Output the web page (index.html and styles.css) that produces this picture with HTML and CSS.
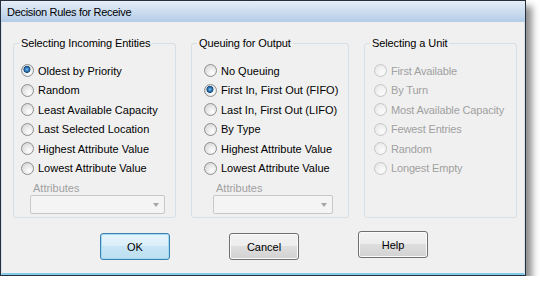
FILE: index.html
```html
<!DOCTYPE html>
<html lang="en">
<head>
  <meta charset="UTF-8">
  <title>Decision Rules for Receive</title>
  <link rel="stylesheet" href="styles.css">
</head>
<body>

  <div class="window">
    <div class="titlebar">Decision Rules for Receive</div>

    <div class="client">
      <div class="groups">

        <fieldset class="group group-incoming">
          <legend>Selecting Incoming Entities</legend>
          <div class="options">
            <label class="option"><input type="radio" name="incoming" checked> Oldest by Priority</label>
            <label class="option"><input type="radio" name="incoming"> Random</label>
            <label class="option"><input type="radio" name="incoming"> Least Available Capacity</label>
            <label class="option"><input type="radio" name="incoming"> Last Selected Location</label>
            <label class="option"><input type="radio" name="incoming"> Highest Attribute Value</label>
            <label class="option"><input type="radio" name="incoming"> Lowest Attribute Value</label>
            <div class="attr">
              <span class="attr-label">Attributes</span>
              <div class="combo"><span class="combo-arrow"></span></div>
            </div>
          </div>
        </fieldset>

        <fieldset class="group group-queuing">
          <legend>Queuing for Output</legend>
          <div class="options">
            <label class="option"><input type="radio" name="queuing"> No Queuing</label>
            <label class="option"><input type="radio" name="queuing" checked> First In, First Out (FIFO)</label>
            <label class="option"><input type="radio" name="queuing"> Last In, First Out (LIFO)</label>
            <label class="option"><input type="radio" name="queuing"> By Type</label>
            <label class="option"><input type="radio" name="queuing"> Highest Attribute Value</label>
            <label class="option"><input type="radio" name="queuing"> Lowest Attribute Value</label>
            <div class="attr">
              <span class="attr-label">Attributes</span>
              <div class="combo"><span class="combo-arrow"></span></div>
            </div>
          </div>
        </fieldset>

        <fieldset class="group group-unit">
          <legend>Selecting a Unit</legend>
          <div class="options">
            <label class="option disabled"><input type="radio" name="unit" disabled> First Available</label>
            <label class="option disabled"><input type="radio" name="unit" disabled> By Turn</label>
            <label class="option disabled"><input type="radio" name="unit" disabled> Most Available Capacity</label>
            <label class="option disabled"><input type="radio" name="unit" disabled> Fewest Entries</label>
            <label class="option disabled"><input type="radio" name="unit" disabled> Random</label>
            <label class="option disabled"><input type="radio" name="unit" disabled> Longest Empty</label>
          </div>
        </fieldset>

      </div>

      <div class="buttons">
        <button class="btn btn-default">OK</button>
        <button class="btn">Cancel</button>
        <button class="btn btn-help">Help</button>
      </div>
    </div>
  </div>

</body>
</html>
```

FILE: styles.css
```css
body {
  margin: 0;
  background: #fff;
  font-family: "Liberation Sans", Arial, sans-serif;
  font-size: 11px;
  color: #000;
}
/* Ventana */
.window {
  box-sizing: border-box;
  width: 526px;
  height: 276px;
  border: 1px solid #26313d;
  display: flex;
  flex-direction: column;
  background: #f0f0f0;
  box-shadow: 6px 6px 7px rgba(0,0,0,0.45);
}
.titlebar {
  height: 21px;
  line-height: 22px;
  padding-left: 6px;
  font-size: 11px;
  letter-spacing: -0.3px;
  background: linear-gradient(#e6eef8, #b3cce7);
}
.client {
  flex: 1;
  padding: 14px 0 0 11px;
  border-style: solid;
  border-width: 0 1px 2px 1px;
  border-color: #d3e1ef #d3e1ef #83cbe8 #d3e1ef;
}
.groups {
  display: grid;
  grid-template-columns: 163px 158px 153px;
  column-gap: 15px;
}
/* Grupos */
.group {
  margin: 0;
  min-width: 0;
  padding: 11px 8px 3px 5px;
  border: 1px solid #d5dfe5;
  border-radius: 3px;
}
.group legend {
  padding: 0 2px;
  line-height: 14px;
  letter-spacing: -0.1px;
}
.group-incoming .options { padding-left: 2px; }
.group-queuing .options { padding-left: 7px; }
.group-unit .options { padding-left: 4px; }

.option {
  display: flex;
  align-items: center;
  gap: 4px;
  height: 19.5px;
}
.option.disabled {
  color: #a0a0a0;
}
.group-unit .option {
  letter-spacing: -0.15px;
}
.option input {
  appearance: none;
  -webkit-appearance: none;
  flex: none;
  width: 13px;
  height: 13px;
  margin: 0;
  border: 1px solid #8d8f90;
  border-radius: 50%;
  background: radial-gradient(circle at 65% 70%, #ffffff 0, #eeeeee 35%, #cfcfcf 100%);
}
.option input:checked {
  background:
    radial-gradient(circle at 45% 40%, #7fc4ee 0, #2c74b4 2px, #174b7a 3.2px, rgba(0,0,0,0) 3.8px),
    radial-gradient(circle at 65% 70%, #ffffff 0, #eeeeee 35%, #cfcfcf 100%);
}
.option input:disabled {
  border-color: #c6c6c6;
  background: radial-gradient(circle at 65% 70%, #fbfbfb 0, #f3f3f3 40%, #e2e2e2 100%);
}
/* Atributos */
.attr {
  margin: 3px 0 0 9px;
}
.attr-label {
  display: block;
  line-height: 14px;
  padding-left: 3px;
  color: #a0a0a0;
}
.combo {
  box-sizing: border-box;
  height: 19px;
  border: 1px solid #c8c8c8;
  border-radius: 2px;
  background: #f4f4f4;
  display: flex;
  align-items: center;
  justify-content: flex-end;
  padding-right: 5px;
}
.group-incoming .combo { width: 135px; }
.group-queuing .combo { width: 120px; }
.combo-arrow {
  width: 0;
  height: 0;
  border-left: 3.5px solid transparent;
  border-right: 3.5px solid transparent;
  border-top: 4px solid #a6a6a6;
}
/* Botones */
.buttons {
  display: flex;
  align-items: flex-start;
  gap: 59px;
  margin: 13px 0 0 87px;
}
.btn {
  box-sizing: border-box;
  width: 70px;
  height: 27px;
  margin-top: 2px;
  padding: 0;
  font-family: "Liberation Sans", Arial, sans-serif;
  font-size: 11px;
  color: #000;
  border: 1px solid #707070;
  border-radius: 3px;
  background: linear-gradient(#f3f3f3 0, #ececec 50%, #dedede 50%, #d2d2d2 100%);
  box-shadow: inset 0 0 0 1px #fbfbfb;
}
.btn-default {
  border-color: #3c7fb1;
  background: linear-gradient(#e6f4fc 0, #d9eef9 50%, #c8e5f5 50%, #bcdff1 100%);
  box-shadow: inset 0 0 0 1px #9fdcf4;
}
.btn-help {
  margin-top: 0;
}
```
